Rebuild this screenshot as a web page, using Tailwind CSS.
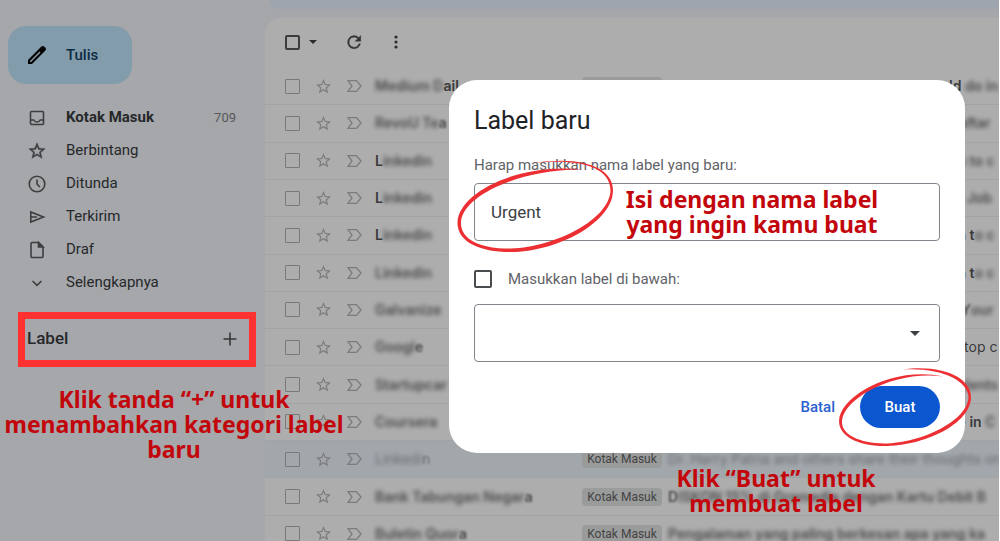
<!DOCTYPE html>
<html lang="id" class="h-full">
<head>
  <meta charset="UTF-8" />
  <meta name="viewport" content="width=device-width, initial-scale=1.0" />
  <title>Label baru — Kotak Masuk</title>
  <script src="https://cdn.jsdelivr.net/npm/@tailwindcss/browser@4"></script>
</head>
<body class="relative h-screen overflow-hidden bg-white pr-px font-['Roboto',sans-serif] text-[#26282a] antialiased">

  <div class="flex h-full bg-[#a5a7aa]">

    <!-- Sidebar -->
    <aside class="w-[265px] shrink-0 pt-[26px]">
      <button class="ml-2 flex h-[58px] w-[124px] items-center rounded-[18px] bg-[#829cac] pl-[17px] text-[15px] font-medium text-[#0d2b42]">
        <svg class="mr-[17px] size-6 text-black" viewBox="0 0 24 24" fill="currentColor"><path d="M20.4 4.8l-1.2-1.2a2 2 0 0 0-2.8 0L3 17v4h4L20.4 7.600a2 2 0 0 0 0-2.800zM6 19H5v-1L14.500 8.500l1 1L6 19z"/></svg>
        Tulis
      </button>

      <nav class="mt-[17px] pr-[29px] pl-7 text-[15px]">
        <a href="#" class="flex h-[33px] items-center font-bold">
          <svg class="mr-5 size-[18px]" viewBox="0 0 18 18" fill="none" stroke="#3c3e40" stroke-width="1.600"><rect x="2.500" y="2.500" width="13" height="13" rx="1"/><path d="M2.500 11h3.300c.6 1.300 1.700 2 3.200 2s2.600-.7 3.200-2h3.300"/></svg>
          <span class="flex-1">Kotak Masuk</span>
          <span class="text-[13px] font-normal text-[#54575a]">709</span>
        </a>
        <a href="#" class="flex h-[33px] items-center">
          <svg class="mr-5 size-[18px]" viewBox="1 1 22 22" fill="#3c3e40" stroke="#3c3e40" stroke-width=".5"><path d="M22 9.240l-7.190-.62L12 2 9.190 8.630 2 9.240l5.460 4.730L5.820 21 12 17.270 18.180 21l-1.630-7.030L22 9.240zM12 15.400l-3.760 2.270 1-4.280-3.320-2.880 4.380-.38L12 6.100l1.710 4.040 4.380.38-3.320 2.880 1 4.280L12 15.400z"/></svg>
          Berbintang
        </a>
        <a href="#" class="flex h-[33px] items-center">
          <svg class="mr-5 size-[18px]" viewBox="0 0 18 18" fill="none" stroke="#3c3e40" stroke-width="1.600"><circle cx="9" cy="9" r="7.800"/><path d="M9 4.500V9l2.800 3"/></svg>
          Ditunda
        </a>
        <a href="#" class="flex h-[33px] items-center">
          <svg class="mr-5 size-[18px]" viewBox="0 0 18 18" fill="none" stroke="#3c3e40" stroke-width="1.600"><path d="M2.800 4v10L15.500 9zM3 9h6"/></svg>
          Terkirim
        </a>
        <a href="#" class="flex h-[33px] items-center">
          <svg class="mr-5 size-[18px]" viewBox="0 0 18 18" fill="none" stroke="#3c3e40" stroke-width="1.600"><path d="M10.500 1.500H4a1 1 0 0 0-1 1v13a1 1 0 0 0 1 1h10a1 1 0 0 0 1-1V6z"/><path d="M10.500 1.500V6H15z" fill="#3c3e40"/></svg>
          Draf
        </a>
        <a href="#" class="flex h-[33px] items-center">
          <svg class="mr-5 size-[18px]" viewBox="0 0 18 18" fill="none" stroke="#3c3e40" stroke-width="1.600"><path d="M4.500 7L9 11.300 13.500 7"/></svg>
          Selengkapnya
        </a>
      </nav>

      <!-- Label section, highlighted -->
      <div class="mt-[13px] mr-[9px] ml-[18px] flex h-[55px] items-center justify-between border-[7px] border-[#ff3131] pr-3 pb-[2px] pl-[2px]">
        <h2 class="text-[17px] font-medium">Label</h2>
        <button aria-label="Buat label baru">
          <svg class="size-[14px]" viewBox="0 0 14 14" stroke="#333537" stroke-width="1.600"><path d="M7 .5v13M.5 7h13"/></svg>
        </button>
      </div>
    </aside>

    <!-- Mail list -->
    <main class="flex min-w-0 flex-1 flex-col">
      <div class="ml-1 h-[9px] shrink-0 rounded-bl-2xl bg-[#9ea5ae]"></div>

      <div class="mt-[9px] flex-1 rounded-tl-2xl bg-[#adadad]">
        <div class="flex h-[50px] items-center pb-[2px] pl-5">
          <input type="checkbox" aria-label="Pilih semua" class="size-[15px] appearance-none rounded-[2px] border-2 border-[#3c3c3c]" />
          <svg class="ml-[9px] h-1 w-2" viewBox="0 0 8 4" fill="#2c2c2c"><path d="M0 0h8L4 4z"/></svg>
          <button aria-label="Muat ulang" class="ml-7">
            <svg class="size-[18px]" viewBox="0 0 24 24" fill="#333" stroke="#333" stroke-width=".4"><path d="M17.650 6.350A7.960 7.960 0 0 0 12 4a8 8 0 1 0 7.730 10h-2.080A6 6 0 1 1 12 6c1.660 0 3.140.69 4.220 1.780L13 11h7V4l-2.350 2.350z" transform="translate(-1 -1) scale(1.100)"/></svg>
          </button>
          <button aria-label="Lainnya" class="ml-[31px]">
            <svg class="h-[14px] w-1" viewBox="0 0 4 14" fill="#2c2c2c"><circle cx="2" cy="2" r="1.600"/><circle cx="2" cy="7" r="1.600"/><circle cx="2" cy="12" r="1.600"/></svg>
          </button>
        </div>
        <ul id="mailList" class="grid h-[485px] auto-rows-fr font-['Inter',sans-serif] text-sm"></ul>
      </div>
    </main>
  </div>

  <!-- Dialog -->
  <form class="absolute top-20 left-[449px] w-[516px] rounded-[28px] bg-white p-[25px] text-[#3c4043]">
    <h1 class="text-[25px] leading-8 text-[#1f2327]">Label baru</h1>
    <label for="labelName" class="mt-[18px] block text-[15px] leading-5 text-[#5f6368]">Harap masukkan nama label yang baru:</label>
    <input id="labelName" type="text" value="Urgent" class="mt-2 block h-[58px] w-full rounded-[4px] border border-[#80868b] px-4 text-[17px]" />

    <div class="mt-7 flex h-5 items-center">
      <input id="nest" type="checkbox" class="size-[18px] appearance-none rounded-[2px] border-2 border-[#4a4d50]" />
      <label for="nest" id="nestLabel" class="ml-4 text-[15px] text-[#5f6368]">Masukkan label di bawah:</label>
    </div>
    <div class="relative mt-[15px]">
      <select aria-labelledby="nestLabel" class="block h-[58px] w-full appearance-none rounded-[4px] border border-[#80868b] px-4">
        <option></option>
      </select>
      <svg class="pointer-events-none absolute top-[27px] right-5 h-[5px] w-[10px]" viewBox="0 0 10 5" fill="#3c4043"><path d="M0 0h10L5 5z"/></svg>
    </div>

    <div class="mt-6 flex items-center justify-end text-[15px] font-medium">
      <button type="button" class="mr-[25px] text-[#2a5fcf]">Batal</button>
      <button type="button" class="h-[42px] w-20 rounded-full bg-[#0b57d0] text-white">Buat</button>
    </div>
  </form>

  <!-- Tutorial notes -->
  <div class="pointer-events-none font-['Noto_Sans',sans-serif] text-[23px] leading-[25px] font-bold text-[#c2060b]">
    <p class="absolute top-[387px] left-0 w-[348px] text-center">Klik tanda “+” untuk<br />menambahkan kategori label<br />baru</p>
    <p class="absolute top-[187px] left-[612px] w-[280px] text-center">Isi dengan nama label<br />yang ingin kamu buat</p>
    <p class="absolute top-[466px] left-[666px] w-[220px] text-center">Klik “Buat” untuk<br />membuat label</p>
  </div>
  <svg class="pointer-events-none absolute top-[155px] left-[453px] h-[100px] w-[164px]" viewBox="453 155 164 100" fill="#ec2f33">
    <path d="M533 163C585 155 613 169 613 190C613 223 556 252 511 252C480 252 457 242 457.500 222C459 193 516 163 583 169.500C526 168 463 194 461 222C460 240 482 249 511 248.500C556 247 610 219 610.500 190C610 167 580 158 533 163z"/>
  </svg>
  <svg class="pointer-events-none absolute top-[364px] left-[835px] h-[84px] w-[140px]" viewBox="835 364 140 84" fill="#ec2f33">
    <path d="M902 369.500C943 364 971 378 971 397C971 424 924 446 884 446C858 446 839 436 839 421C840 396 893 366 943 376.500C895 370 844 398 842 421C841 435 860 443 884 443.500C923 443 968 420 968.500 397C968 380 940 367 902 369.500z"/>
  </svg>

  <script>
    // 0 = sharp, 1 = blurred, 2 = edge of the blurred area
    const blurClass = [
      'whitespace-pre',
      'inline-block whitespace-pre opacity-85 blur-[2px]',
      'inline-block whitespace-pre opacity-85 blur-[1px]',
    ];

    // tail is the end of the subject that shows past the dialog
    const mails = [
      { from: [['Medium D', 1], ['ail', 0]], bold: 1, tail: [['ld', 0], [' do in', 1]] },
      { from: [['RevoU Te', 1], ['a', 2]], bold: 1, tail: [['Daftar', 1]] },
      { from: [['L', 0], ['inkedin', 1]], bold: 1, tail: [['on to c', 1]] },
      { from: [['L', 0], ['inkedin', 1]], bold: 1, tail: [['ur Job', 1]] },
      { from: [['L', 0], ['inkedin', 1]], bold: 1, tail: [['on t', 0], ['o c', 1]] },
      { from: [['Linkedin', 1]], bold: 1, tail: [['on t', 0], ['o c', 1]] },
      { from: [['Galvanize', 1]], bold: 1, tail: [['n Y', 2], ['our', 1]] },
      { from: [['Googl', 1], ['e', 2]], bold: 1, tail: [['sktop c', 0]], plainTail: 1 },
      { from: [['Startupcar', 1]], bold: 1, tail: [['Talents', 1]] },
      { from: [['Coursera', 1]], bold: 1, tail: [['he in ', 0], ['C', 1]] },
      { from: [['Linkedi', 1], ['n', 2]], subject: [['Dr. Harry Patria and others share their thoughts on', 1]] },
      { from: [['Bank Tabungan Negar', 1], ['a', 2]], bold: 1, subject: [['D', 2], ['ISKON 15% di Gramedia dengan Kartu Debit B', 1]] },
      { from: [['Buletin Quor', 1], ['a', 2]], bold: 1, subject: [['Pengalaman yang paling berkesan apa yang ka', 1]] },
    ];

    const spans = parts => parts.map(([text, level]) =>
      `<span class="${blurClass[level]}">${text}</span>`).join('');

    document.getElementById('mailList').innerHTML = mails.map(m => `
      <li class="flex items-center overflow-hidden border-b border-[#a2a3a4] pl-5 whitespace-nowrap ${m.bold ? 'font-semibold text-[#3a3a3a]' : 'bg-[#a2a7ac] text-[#5d6063]'}">
        <input type="checkbox" aria-label="Pilih" class="size-[15px] shrink-0 appearance-none rounded-[1px] border border-[#797979]" />
        <svg class="ml-4 size-[15px] shrink-0" viewBox="2 2 20 20" fill="#7c7c7c"><path d="M22 9.240l-7.190-.62L12 2 9.190 8.630 2 9.240l5.460 4.730L5.820 21 12 17.270 18.180 21l-1.630-7.030L22 9.240zM12 15.400l-3.760 2.270 1-4.280-3.320-2.880 4.380-.38L12 6.100l1.710 4.040 4.380.38-3.320 2.880 1 4.280L12 15.400z"/></svg>
        <svg class="ml-4 h-3 w-[15px] shrink-0" viewBox="0 0 15 12" fill="none" stroke="#7c7c7c" stroke-width="1.300"><path d="M1 .7h8.500L14 6l-4.500 5.300H1L5 6z"/></svg>
        <span class="ml-[13px] w-[207px] shrink-0">${spans(m.from)}</span>
        <span class="w-20 shrink-0 rounded-[4px] bg-[#9a9b9b] text-center font-['Roboto',sans-serif] text-xs leading-[18px] font-normal text-[#434343]">Kotak Masuk</span>
        ${m.subject
          ? `<span class="ml-[6px]">${spans(m.subject)}</span>`
          : `<span class="ml-[287px] ${m.plainTail ? 'font-normal' : ''}">${spans(m.tail)}</span>`}
      </li>`).join('');
  </script>
</body>
</html>
